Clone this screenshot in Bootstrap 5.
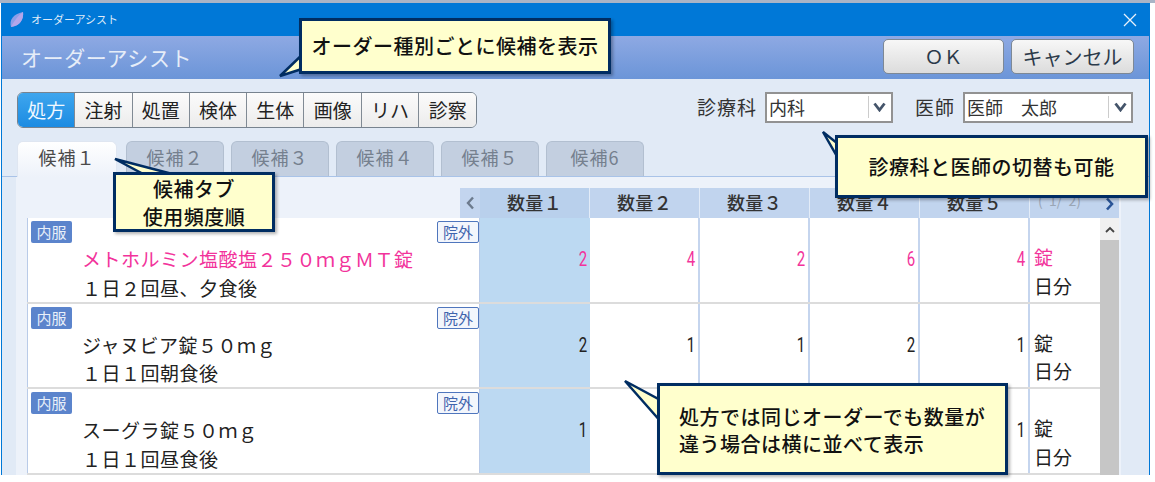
<!DOCTYPE html>
<html lang="ja">
<head>
<meta charset="utf-8">
<title>オーダーアシスト</title>
<link href="https://cdn.jsdelivr.net/npm/bootstrap@5.3.0/dist/css/bootstrap.min.css" rel="stylesheet">
<style>
html, body { margin: 0; height: 482px; overflow: hidden; background: #fff; }
body { font-family: "Noto Sans CJK JP", "Liberation Sans", sans-serif; color: #222; }
.scr { width: 1155px; height: 482px; position: relative; overflow: hidden; }
.topstrip { height: 3px; background: #a9b4c6; }
.win { width: 1149px; height: 472px; margin-left: 1px; border-left: 1px solid #0078d7; border-right: 1px solid #0078d7; background: #e1eaf6; position: relative; overflow: hidden; }
.titlebar { height: 33px; background: #0078d7; color: #dfeaf8; font-size: 11px; padding-left: 7px; gap: 6px; }
.titlebar .closex { margin-left: auto; margin-right: 12px; }
.headband { height: 43px; background: linear-gradient(#8ea9e3, #6b95d8); padding: 3px 15px 0 19px; }
.headband h1 { font-size: 21px; font-weight: 400; color: #e6edf8; margin: 0; letter-spacing: .6px; padding-top: 6px; }
.bigbtn { height: 35px; border: 1px solid #7d8895; border-radius: 5px; background: linear-gradient(#f7f7f7, #dcdcdc); color: #2b3a4a; font-size: 20px; padding: 0; display: flex; align-items: center; justify-content: center; }
.okbtn { width: 121px; margin-right: 7px; font-size: 19px; }
.cancelbtn { width: 123px; }
.toolrow { height: 62px; padding: 13px 16px 0 15px; }
.kinds { border: 1px solid #77838f; border-radius: 6px; overflow: hidden; height: 36px; background: #f5f5f5; }
.kindbtn { width: 57.3px; height: 34px; font-size: 19px; line-height: 33px; text-align: center; border-right: 1px solid #808a94; background: linear-gradient(#fbfbfb, #ececec); color: #222; }
.kindbtn:last-child { border-right: 0; }
.kindbtn.on { background: linear-gradient(#3ea6ee, #1b8be2); color: #f0f8ff; }
.pick-label { font-size: 19px; letter-spacing: 1px; color: #333; margin-right: 8px; }
.pickbox { height: 31px; border: 2px solid #929292; background: #fff; font-size: 18px; line-height: 26px; padding-left: 2px; position: relative; color: #333; }
.pickbox .arr { position: absolute; right: 0; top: 2px; bottom: 3px; width: 23px; border-left: 1px solid #ccc; display: flex; align-items: center; justify-content: center; }
.wide-gap { margin-left: 22px; }
.dept-box { width: 128px; }
.doctor-box { width: 170px; }
.tabrow { height: 36px; padding-left: 15px; gap: 7px; border-bottom: 1px solid #a9c3e8; }
.tabbtn { width: 98px; height: 35px; border: 1px solid #b2bfd0; border-bottom: 0; border-radius: 6px 6px 0 0; background: #c3cfe0; color: #75808e; font-size: 18px; line-height: 31px; text-align: center; letter-spacing: 1px; }
.tabbtn.on { width: 100px; margin-right: 2px; background: linear-gradient(#fff, #edf2fa); color: #4a4a4a; border-color: #dfe6f1; height: 36px; margin-bottom: -1px; position: relative; }
.panel { background: #edf2fa; height: 300px; margin-left: 14px; width: 1105px; padding: 11px 0 0 11px; }
.gridhead { height: 30px; }
.leftpad { width: 433px; }
.prevbtn { width: 20px; background: #c3d5ef; display: flex; align-items: center; justify-content: center; }
.hcell { width: 110px; background: #c1d4ee; border-right: 1px solid #e3ecf8; text-align: center; font-size: 18px; line-height: 29px; color: #333; font-weight: 500; letter-spacing: .4px; }
.hfirst { background: #b9d0ec; }
.pagecell { width: 89px; background: #c1d4ee; color: #9aa6b6; font-size: 14px; line-height: 24px; padding-left: 8px; display: flex; white-space: pre; }
.pagecell svg { margin-left: auto; margin-right: 5px; margin-top: 9px; }
.gridbody { width: 1092px; background: #fff; position: relative; height: 259px; }
.rowline { height: 85.5px; border-bottom: 2px solid #dcdcdc; width: 1073px; }
.namecell { width: 453px; height: 100%; border-left: 1px solid #b9cbe8; border-right: 1px solid #b9cbe8; position: relative; padding: 27px 0 0 54px; font-size: 19px; line-height: 28.5px; letter-spacing: .5px; white-space: nowrap; }
.tagfill { position: absolute; left: 3px; top: 3px; width: 41px; height: 22px; background: #5b84cc; color: #e9f0fa; font-size: 15px; line-height: 21px; text-align: center; border-radius: 2px; letter-spacing: 0; }
.tagline { position: absolute; right: 0; top: 3px; width: 42px; height: 22px; border: 1px solid #4f76bd; background: #f3f6fc; color: #3f64ad; font-size: 15px; line-height: 19px; text-align: center; border-radius: 2px; letter-spacing: 0; }
.qty { width: 110px; height: 100%; border-right: 2px solid #c5d5ee; text-align: right; font-family: "Roboto", "Liberation Sans", sans-serif; font-size: 20px; padding: 26px 3px 0 0; }
.qty span { display: inline-block; transform: scaleX(.75); transform-origin: right; }
.qty.firstq { background: #bcd9f2; border-right: 0; }
.unit { width: 69px; padding: 25px 0 0 4px; font-size: 19px; line-height: 28.5px; }
.pink { color: #f2339b; }
.sbar { position: absolute; left: 1073px; top: 0; width: 19px; height: 259px; background: #c6c6c6; }
.sbar .sup { height: 22px; background: #f1f1f1; display: flex; align-items: center; justify-content: center; }
.note { position: absolute; background: #ffffcd; border: 3px solid #002d62; box-shadow: 2px 2px 3px rgba(0,0,0,.3); color: #111; font-size: 20px; font-weight: 500; line-height: 28px; letter-spacing: .5px; z-index: 3; }
.note-tail { position: absolute; left: 0; top: 0; z-index: 2; }
.note-one { left: 299px; top: 18px; width: 312px; height: 56px; }
.note-two { left: 113px; top: 172px; width: 162px; height: 60px; }
.note-three { left: 835px; top: 135px; width: 313px; height: 63px; }
.note-four { left: 657px; top: 383px; width: 351px; height: 92px; padding: 17px 0 0 19px; line-height: 27px; white-space: nowrap; }
</style>
</head>
<body>
<div class="scr">
  <div class="topstrip"></div>
  <div class="win">
    <div class="titlebar d-flex align-items-center">
      <svg width="16" height="18" viewBox="0 0 16 18"><path d="M2 16C0 9 4 3 14 1c1 7-3 14-12 15z" fill="#8d9ee8"/><path d="M2 16C5 10 8 6 14 1c1 7-3 14-12 15z" fill="#b5a6ea"/></svg>
      <span>オーダーアシスト</span>
      <svg class="closex" width="14" height="14" viewBox="0 0 14 14"><path d="M1 1l12 12M13 1L1 13" stroke="#e8f1fb" stroke-width="1.3"/></svg>
    </div>
    <div class="headband d-flex">
      <h1>オーダーアシスト</h1>
      <div class="ms-auto d-flex">
        <button class="bigbtn okbtn" type="button">ＯＫ</button>
        <button class="bigbtn cancelbtn" type="button">キャンセル</button>
      </div>
    </div>
    <div class="toolrow d-flex align-items-start">
      <div class="kinds d-flex">
        <div class="kindbtn on">処方</div><div class="kindbtn">注射</div><div class="kindbtn">処置</div><div class="kindbtn">検体</div><div class="kindbtn">生体</div><div class="kindbtn">画像</div><div class="kindbtn">リハ</div><div class="kindbtn">診察</div>
      </div>
      <div class="ms-auto d-flex align-items-center">
        <span class="pick-label">診療科</span>
        <div class="pickbox dept-box">内科<span class="arr"><svg width="13" height="10" viewBox="0 0 13 10"><path d="M1.500 1.500L6.500 8l5-6.500" fill="none" stroke="#44546a" stroke-width="2.800"/></svg></span></div>
        <span class="pick-label wide-gap">医師</span>
        <div class="pickbox doctor-box">医師　太郎<span class="arr"><svg width="13" height="10" viewBox="0 0 13 10"><path d="M1.500 1.500L6.500 8l5-6.500" fill="none" stroke="#44546a" stroke-width="2.800"/></svg></span></div>
      </div>
    </div>
    <div class="tabrow d-flex align-items-end">
      <div class="tabbtn on">候補１</div><div class="tabbtn">候補２</div><div class="tabbtn">候補３</div><div class="tabbtn">候補４</div><div class="tabbtn">候補５</div><div class="tabbtn">候補6</div>
    </div>
    <div class="panel">
      <div class="gridhead d-flex">
        <div class="leftpad"></div>
        <div class="prevbtn"><svg width="9" height="14" viewBox="0 0 9 14"><path d="M7 1.500L2 7l5 5.500" fill="none" stroke="#6d7b8e" stroke-width="2.400"/></svg></div>
        <div class="hcell hfirst">数量１</div><div class="hcell">数量２</div><div class="hcell">数量３</div><div class="hcell">数量４</div><div class="hcell">数量５</div>
        <div class="pagecell">(  1/  2)<svg width="9" height="14" viewBox="0 0 9 14"><path d="M2 1.500L7 7l-5 5.500" fill="none" stroke="#2a5598" stroke-width="2.600"/></svg></div>
      </div>
      <div class="gridbody">
        <div class="rowline d-flex">
          <div class="namecell"><span class="tagfill">内服</span><span class="tagline">院外</span><div class="pink">メトホルミン塩酸塩２５０ｍｇＭＴ錠</div><div>１日２回昼、夕食後</div></div>
          <div class="qty firstq pink"><span>2</span></div><div class="qty pink"><span>4</span></div><div class="qty pink"><span>2</span></div><div class="qty pink"><span>6</span></div><div class="qty pink"><span>4</span></div>
          <div class="unit"><div class="pink">錠</div><div>日分</div></div>
        </div>
        <div class="rowline d-flex">
          <div class="namecell"><span class="tagfill">内服</span><span class="tagline">院外</span><div>ジャヌビア錠５０ｍｇ</div><div>１日１回朝食後</div></div>
          <div class="qty firstq"><span>2</span></div><div class="qty"><span>1</span></div><div class="qty"><span>1</span></div><div class="qty"><span>2</span></div><div class="qty"><span>1</span></div>
          <div class="unit"><div>錠</div><div>日分</div></div>
        </div>
        <div class="rowline d-flex">
          <div class="namecell"><span class="tagfill">内服</span><span class="tagline">院外</span><div>スーグラ錠５０ｍｇ</div><div>１日１回昼食後</div></div>
          <div class="qty firstq"><span>1</span></div><div class="qty"><span></span></div><div class="qty"><span></span></div><div class="qty"><span></span></div><div class="qty"><span>1</span></div>
          <div class="unit"><div>錠</div><div>日分</div></div>
        </div>
        <div class="sbar"><div class="sup"><svg width="10" height="7" viewBox="0 0 10 7"><path d="M1 6l4-4 4 4" fill="none" stroke="#444" stroke-width="1.800"/></svg></div></div>
      </div>
    </div>
  </div>

  <svg class="note-tail" width="1155" height="482">
    <path d="M280 76L305 52L305 68Z" fill="#ffffcd" stroke="#002d62" stroke-width="2.500"/>
    <path d="M115 159L147 176L180 176Z" fill="#ffffcd" stroke="#002d62" stroke-width="2.500"/>
    <path d="M823 132L842 147L842 165Z" fill="#ffffcd" stroke="#002d62" stroke-width="2.500"/>
    <path d="M625 381L662 401L662 423Z" fill="#ffffcd" stroke="#002d62" stroke-width="2.500"/>
  </svg>
  <div class="note note-one d-flex align-items-center justify-content-center">オーダー種別ごとに候補を表示</div>
  <div class="note note-two text-center">候補タブ<br>使用頻度順</div>
  <div class="note note-three d-flex align-items-center justify-content-center">診療科と医師の切替も可能</div>
  <div class="note note-four">処方では同じオーダーでも数量が<br>違う場合は横に並べて表示</div>
</div>
</body>
</html>
